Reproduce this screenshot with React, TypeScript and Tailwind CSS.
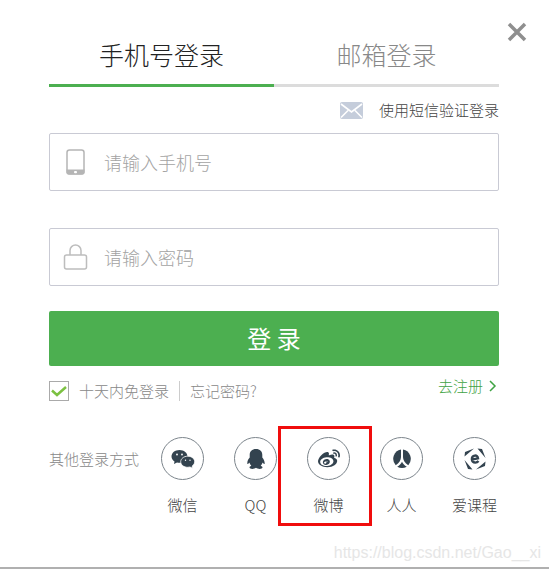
import { useState } from "react";
import type { ReactNode } from "react";
import { FaWeibo } from "react-icons/fa";

const MailIcon = () => (
  <svg viewBox="0 0 23 17" className="h-[17px] w-[23px]" aria-hidden="true">
    <rect width="23" height="17" rx="2" fill="#c5cddb" />
    <path d="M1 2l10.500 8L22 2M1 15.500l7-7M22 15.500l-7-7" fill="none" stroke="#fff" strokeWidth="1.600" />
  </svg>
);

const PhoneIcon = () => (
  <svg viewBox="0 0 26 26" className="size-[26px]" aria-hidden="true">
    <rect x="5" y="1" width="17" height="24" rx="2.500" fill="none" stroke="#b5b5b5" strokeWidth="1.500" />
    <path d="M4.500 20.500h18v3a2 2 0 0 1-2 2h-14a2 2 0 0 1-2-2z" fill="#b5b5b5" />
    <rect x="12" y="22" width="3" height="2.200" rx="1" fill="#fff" />
  </svg>
);

const LockIcon = () => (
  <svg viewBox="0 0 26 26" className="size-[26px]" aria-hidden="true" fill="none" stroke="#bdbdbd" strokeWidth="1.500">
    <rect x="2.500" y="11" width="22" height="14" rx="2" />
    <path d="M8 11V6.500a5.500 5.500 0 0 1 11 0V11" />
  </svg>
);

const WechatIcon = () => (
  <svg viewBox="0 0 24 20" className="h-5 w-6" aria-hidden="true">
    <path
      d="M8.500 1C4 1 .500 3.800.500 7.500c0 2 1.200 3.700 3 4.900L3 15l3-1.500c.800.200 1.600.300 2.500.300 4.500 0 8-2.700 8-6.300S13 1 8.500 1z"
      fill="currentColor"
    />
    <path
      d="M16.700 7.200c3.900 0 7 2.500 7 5.600 0 1.700-1 3.200-2.500 4.200l.400 2.300-2.600-1.300c-.700.200-1.500.300-2.300.300-3.900 0-7-2.400-7-5.500s3.100-5.600 7-5.600z"
      fill="currentColor"
      stroke="#fff"
      strokeWidth=".800"
    />
    <g fill="#fff">
      <circle cx="6" cy="5.500" r=".900" />
      <circle cx="11" cy="5.500" r=".900" />
      <circle cx="14.500" cy="11.300" r=".700" />
      <circle cx="19" cy="11.300" r=".700" />
    </g>
  </svg>
);

const QqIcon = () => (
  <svg viewBox="0 0 20 22" className="h-[22px] w-5" fill="currentColor" aria-hidden="true">
    <path d="M10 1C6 1 3.700 3.500 3.700 7v2.500C2.300 11.200 1.200 13.200 1.300 15.200c0 1.300.900 1.100 2.100-.600.300 1.300 1 2.400 1.900 3.200-1.200.500-1.800 1.100-1.800 1.800 0 1.600 4.700 1.800 6.500.200 1.800 1.600 6.500 1.400 6.500-.200 0-.700-.600-1.300-1.800-1.800.900-.800 1.600-1.900 1.900-3.200 1.200 1.700 2.100 1.900 2.100.600 0-2-1-4-2.400-5.700V7C16.300 3.500 14 1 10 1z" />
  </svg>
);

const RenrenIcon = () => (
  <svg viewBox="0 0 20 20" className="size-5" fill="currentColor" aria-hidden="true">
    <path d="M9 .500v7.500c0 3.200-1.900 6-5.300 8.200A9.500 9.500 0 0 1 9 .500z" />
    <path d="M11 .500v7.500c0 3.200 1.900 6 5.300 8.200A9.500 9.500 0 0 0 11 .500z" />
    <path d="M10 12.700c1 2 2.500 3.700 4.800 5a9.500 9.500 0 0 1-9.600 0c2.300-1.300 3.800-3 4.800-5z" />
  </svg>
);

const CourseIcon = () => (
  <svg viewBox="0 0 24 24" className="size-6" fill="currentColor" aria-hidden="true">
    <path d="M14.500 1.500l4.500.500 3.500 9zM22.500 14.500l-.500 4.500-9 3.500zM9.500 22.500L5 22l-3.500-9zM1.500 9.500L2 5l9-3.500z" />
    <path
      d="M8.700 12.600l6.300-1.200c-.200-2-1.500-3-3.200-2.800-1.900.200-3 1.700-2.900 3.700.100 2.100 1.500 3.300 3.400 3.300 1.300 0 2.400-.500 3.200-1.500"
      fill="none"
      stroke="currentColor"
      strokeWidth="2.400"
    />
  </svg>
);

const providers: { name: string; icon: ReactNode; marked?: boolean }[] = [
  { name: "微信", icon: <WechatIcon /> },
  { name: "QQ", icon: <QqIcon /> },
  { name: "微博", icon: <FaWeibo className="size-[22px]" />, marked: true },
  { name: "人人", icon: <RenrenIcon /> },
  { name: "爱课程", icon: <CourseIcon /> },
];

interface FieldProps {
  id: string;
  type: string;
  placeholder: string;
  icon: ReactNode;
}

const Field = ({ id, type, placeholder, icon }: FieldProps) => (
  <label
    htmlFor={id}
    className="flex h-[58px] items-center gap-4 rounded-xs border border-[#c9cad4] pl-3"
  >
    {icon}
    <input
      id={id}
      type={type}
      aria-label={placeholder}
      placeholder={placeholder}
      className="h-full min-w-0 flex-1 text-lg text-[#444] outline-none placeholder:text-[#a3a3a3]"
    />
  </label>
);

const App = () => {
  const [tab, setTab] = useState("phone");
  const [remember, setRemember] = useState(true);

  const tabClass = (id: string) =>
    tab === id ? "border-[#4caf50] text-[#222]" : "border-[#dcdcdc] text-[#888]";

  return (
    <main className="relative border-b-2 border-[#b0b0b0] bg-white pr-[50px] pb-[52px] pl-[49px] font-['Noto_Sans_CJK_SC',sans-serif] font-light">
      <button type="button" aria-label="关闭" className="absolute top-[22px] right-[22px]">
        <svg viewBox="0 0 20 20" className="size-5" stroke="#8f8f8f" strokeWidth="3.500" aria-hidden="true">
          <path d="M2 2l16 16M18 2L2 18" />
        </svg>
      </button>

      {/* Tabs */}
      <div className="flex pt-6 text-[25px] leading-[60px]">
        <button
          type="button"
          onClick={() => setTab("phone")}
          className={`flex-1 border-b-[3px] ${tabClass("phone")}`}
        >
          手机号登录
        </button>
        <button
          type="button"
          onClick={() => setTab("email")}
          className={`flex-1 border-b-[3px] ${tabClass("email")}`}
        >
          邮箱登录
        </button>
      </div>

      <form onSubmit={(e) => e.preventDefault()}>
        <a href="#sms" className="flex h-[46px] items-center justify-end gap-4 text-[15px] text-[#444]">
          <MailIcon />
          使用短信验证登录
        </a>

        <div className="flex flex-col gap-[37px]">
          <Field id="phone" type="tel" placeholder="请输入手机号" icon={<PhoneIcon />} />
          <Field id="password" type="password" placeholder="请输入密码" icon={<LockIcon />} />
        </div>

        <button
          type="submit"
          className="mt-[25px] h-[55px] w-full rounded-xs bg-[#4caf50] pb-0.5 text-2xl font-normal text-white"
        >
          登 录
        </button>

        <div className="mt-[10px] flex items-start justify-between text-[15px] leading-5">
          <div className="flex items-center pt-[5px] text-[#888]">
            <label className="flex items-center gap-[10px]">
              <span className="grid size-5 place-items-center border border-[#aaa]">
                <input
                  type="checkbox"
                  checked={remember}
                  onChange={(e) => setRemember(e.target.checked)}
                  className="peer col-start-1 row-start-1 size-[18px] appearance-none"
                />
                <svg
                  viewBox="0 0 18 18"
                  className="pointer-events-none invisible col-start-1 row-start-1 size-[18px] peer-checked:visible"
                  fill="none"
                  stroke="#7cc142"
                  strokeWidth="2.500"
                  aria-hidden="true"
                >
                  <path d="M2 8.500l5 4.500 9-8" />
                </svg>
              </span>
              十天内免登录
            </label>
            <a href="#forgot" className="ml-[10px] border-l border-[#ccc] pl-[10px]">
              忘记密码?
            </a>
          </div>
          <a href="#register" className="flex items-center gap-1 text-[#3fa344]">
            去注册
            <svg viewBox="0 0 12 12" className="size-3" fill="none" stroke="currentColor" strokeWidth="1.500" aria-hidden="true">
              <path d="M3 1l5 5-5 5" />
            </svg>
          </a>
        </div>
      </form>

      {/* Otros accesos */}
      <div className="mt-9 flex justify-between pr-0.5 text-[15px]">
        <span className="leading-[44px] text-[#888]">其他登录方式</span>
        <div className="flex gap-7">
          {providers.map((p) => (
            <a
              key={p.name}
              href={`#${p.name}`}
              className="relative flex w-[45px] flex-col items-center gap-[15px] leading-5 whitespace-nowrap text-[#444]"
            >
              <span className="flex size-[43px] items-center justify-center rounded-full border border-[#7c858c] text-[#33434f]">
                {p.icon}
              </span>
              {p.name}
              {p.marked && (
                <span className="pointer-events-none absolute -top-[11px] -right-[21px] -bottom-[11px] -left-7 border-3 border-[#f00d0d]" />
              )}
            </a>
          ))}
        </div>
      </div>

      <span className="absolute right-2 bottom-1 font-['Liberation_Sans',sans-serif] text-base leading-5 font-normal text-[#e6e6e6]">
        https://blog.csdn.net/Gao__xi
      </span>
    </main>
  );
};

export default App;
